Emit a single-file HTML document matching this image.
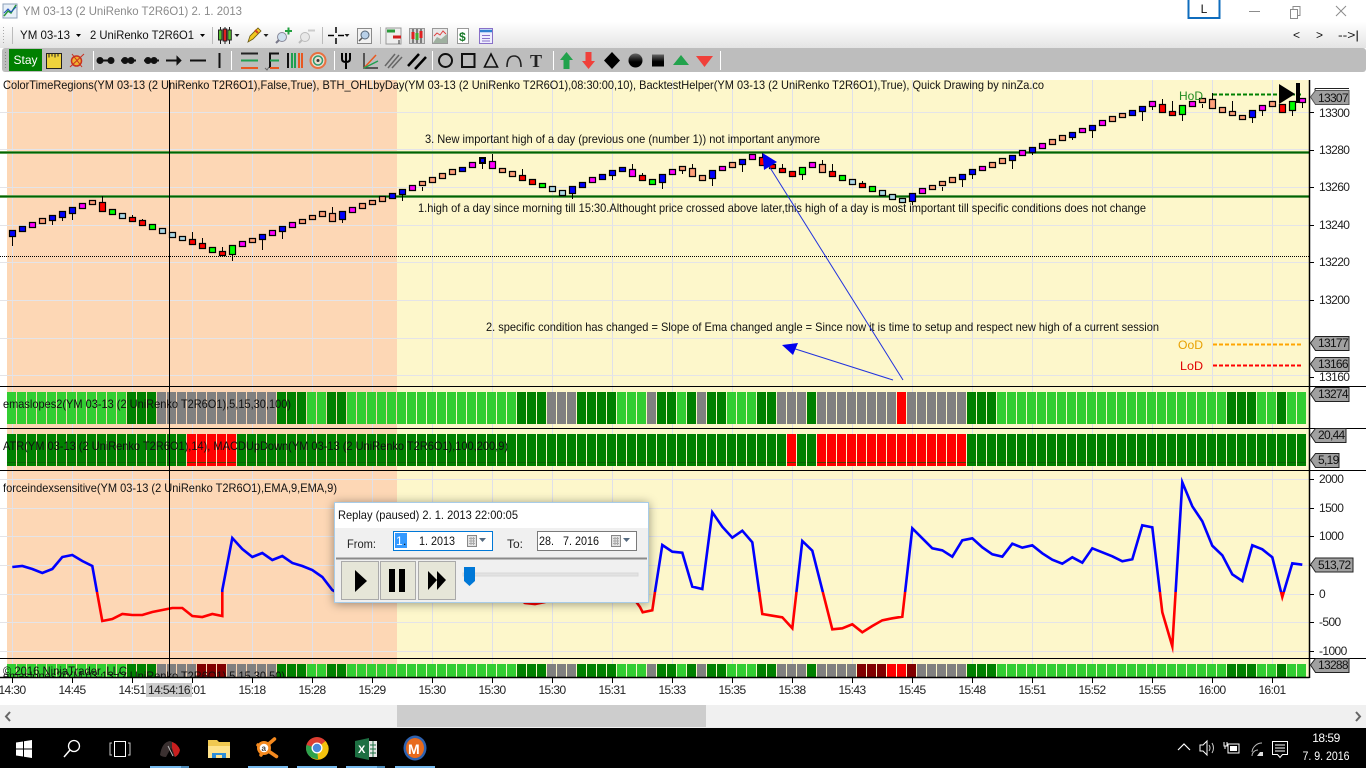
<!DOCTYPE html>
<html><head><meta charset="utf-8"><title>YM 03-13</title>
<style>
html,body{margin:0;padding:0;background:#fff;width:1366px;height:768px;overflow:hidden}
svg{display:block}
text{font-family:"Liberation Sans",Arial,sans-serif;font-size:12px;fill:#111}
.ax{letter-spacing:-.6px;fill:#222}
.t{letter-spacing:-.6px;text-anchor:middle;fill:#222}
.tag{letter-spacing:-.7px}
.tb{fill:#fff}
</style></head><body>
<svg width="1366" height="768" viewBox="0 0 1366 768" xmlns="http://www.w3.org/2000/svg">
<defs>
<linearGradient id="tb1" x1="0" y1="0" x2="0" y2="1"><stop offset="0" stop-color="#fff"/><stop offset="1" stop-color="#e4e4e4"/></linearGradient>
<linearGradient id="ball" x1="0" y1="0" x2="0" y2="1"><stop offset="0" stop-color="#666"/><stop offset=".6" stop-color="#000"/></linearGradient>
<pattern id="gp" x="16" y="0" width="10" height="10" patternUnits="userSpaceOnUse"><rect width="1" height="10" fill="#fdd7b5"/></pattern>
<pattern id="gy" x="16" y="0" width="10" height="10" patternUnits="userSpaceOnUse"><rect width="1" height="10" fill="#fdf7cb"/></pattern>
<clipPath id="cl3"><rect x="0" y="660" width="1309" height="17"/></clipPath>
<clipPath id="up"><rect x="0" y="471" width="1309" height="121"/></clipPath>
<clipPath id="dn"><rect x="0" y="592" width="1309" height="66"/></clipPath>
<filter id="sh" x="-10%" y="-25%" width="120%" height="150%"><feDropShadow dx="0" dy="1" stdDeviation="5" flood-color="#000" flood-opacity=".4"/></filter>
<path id="fi" d="M12.300 567L22.300 566 32.300 569 42.300 573 52.300 569 62.300 557 72.300 555 82.300 561 92.300 566 97 592 102.300 621 112.300 619 122.300 614 132.300 615 142.300 615 152.300 612 162.300 610 172.300 608 182.300 608 192.300 616 202.300 617 212.300 614 222.300 616 222.300 590 232.300 538 242.300 549 252.300 557 262.300 553 272.300 560 282.300 556 292.300 563 302.300 566 312.300 570 322.300 577 332.300 590 342.300 596 515 596 525 603 535 604 545 602 555 596 632 596 640 607 642.700 612.300 652.300 610.300 655 591.700 662.300 545 672.300 551.700 682.300 552.700 692.300 586.700 702.300 589 712.300 512.300 722.300 526.700 732.300 537.700 742.300 530.700 752.300 542.300 762.300 614 772.300 615.700 782.300 617.300 792.300 628.300 802.300 541 812.300 550.700 832.300 629.300 842.300 628.300 852.300 624.300 862.300 632.300 872.300 626 882.300 620.300 892.300 618.300 902.300 616.700 912.300 528.300 922.300 538.300 932.300 548.300 942.300 550.300 952.300 556.700 962.300 540.300 972.300 538.300 982.300 547.300 992.300 554.300 1002.300 556.700 1012.300 543.700 1022.300 547.700 1032.300 545.300 1042.300 553.300 1052.300 559.700 1062.300 563.700 1072.300 557.300 1082.300 562.700 1092.300 548.300 1102.300 552.300 1112.300 556.300 1122.300 561.300 1132.300 559.300 1142.300 525.300 1152.300 527.300 1162.300 612.300 1172.300 646.300 1182.300 482.300 1192.300 506.300 1202.300 521.300 1212.300 545.700 1222.300 555.300 1232.300 574.300 1242.300 581 1252.300 545.300 1262.300 549.300 1272.300 557.300 1282.300 597 1292.300 563.300 1302.300 564.700"/>
</defs>

<!-- title bar -->
<rect width="1366" height="22" fill="#fff"/>
<rect x="3" y="4" width="14" height="14" fill="#e8f0f8" stroke="#8ca0b8"/>
<path d="M4 16l4-5 3 2 5-8" fill="none" stroke="#2a9a3a" stroke-width="1.5"/>
<path d="M4 13l4-4 3 3 5-5" fill="none" stroke="#2050c0" stroke-width="1"/>
<text x="23" y="15" textLength="219" lengthAdjust="spacingAndGlyphs" style="fill:#8a8a8a">YM 03-13 (2 UniRenko T2R6O1)  2. 1. 2013</text>
<rect x="1188.500" y="-1" width="31" height="19" fill="#fff" stroke="#0f6cbd" stroke-width="2"/>
<text x="1204" y="13" text-anchor="middle">L</text>
<path d="M1249 11.500h11" stroke="#8c8c8c"/>
<path d="M1290.500 9.500h7v9h-7zM1293 9.500V6.500h7v9h-2.500" fill="none" stroke="#8c8c8c"/>
<path d="M1336 6l10 10M1346 6l-10 10" stroke="#8c8c8c" stroke-width="1"/>

<!-- toolbar 1 -->
<rect y="22" width="1366" height="26" fill="url(#tb1)"/>
<path d="M3.500 27v16" stroke="#aaa" stroke-dasharray="1 2"/>
<path d="M12.500 27v17" stroke="#bbb"/>
<text x="20" y="39" textLength="50" lengthAdjust="spacingAndGlyphs">YM 03-13</text>
<path d="M76 34h5l-2.500 3z"/>
<text x="90" y="39" textLength="104" lengthAdjust="spacingAndGlyphs">2 UniRenko T2R6O1</text>
<path d="M200 34h5l-2.500 3z"/>
<path d="M212.500 27v17" stroke="#bbb"/>
<g stroke="#222"><path d="M220.500 27v17M225 27v17M229.500 27v17"/>
<rect x="218.500" y="30" width="3.500" height="10" fill="#55c030"/><rect x="223.200" y="29" width="3.500" height="12" fill="#e02020"/><rect x="227.800" y="30" width="3.500" height="10" fill="#55c030"/></g>
<path d="M234.500 34h5l-2.500 3zM263.500 34h5l-2.500 3zM344.500 34h5l-2.500 3z" fill="#222"/>
<path d="M248 42l2-6 8-8 3 3-8 8z" fill="#f2c820" stroke="#6a5a10" stroke-width=".8"/><path d="M255 30l3 3" stroke="#d04020" stroke-width="2"/>
<circle cx="282" cy="37" r="4.500" fill="#cfe0ef" stroke="#889"/><path d="M279 40l-3 3" stroke="#778" stroke-width="2"/><path d="M285 31h7M288.500 27.500v7" stroke="#22a040" stroke-width="2"/>
<circle cx="305" cy="37" r="4.500" fill="#e8e8e8" stroke="#bbb"/><path d="M302 40l-3 3" stroke="#bbb" stroke-width="2"/><path d="M308 30.500h7" stroke="#ccc" stroke-width="2"/>
<path d="M322.500 27v17" stroke="#bbb"/>
<path d="M328 35.500h6M338 35.500h6M336 27v6M336 38v6" stroke="#000" stroke-width="1.500"/>
<rect x="357.500" y="28.500" width="14" height="15" fill="#f2f2f2" stroke="#8a8a8a"/><circle cx="365" cy="35" r="4" fill="#b8d0e8" stroke="#567"/><path d="M362 38l-3 3" stroke="#555" stroke-width="1.500"/>
<path d="M380.500 27v17" stroke="#bbb"/>
<rect x="386" y="28" width="15" height="16" fill="#eee" stroke="#999"/><path d="M387 31h8" stroke="#2a9a3a" stroke-width="3"/><path d="M393 37h8" stroke="#d02020" stroke-width="3"/><path d="M399 40v4" stroke="#333"/>
<rect x="409.500" y="28.500" width="15" height="15" fill="#d8d8d8" stroke="#999"/><path d="M413 29v14M417 29v14M421 29v14" stroke="#222"/><rect x="411.500" y="32" width="3" height="7" fill="#e02020"/><rect x="415.500" y="33" width="3" height="7" fill="#40b030"/><rect x="419.500" y="31" width="3" height="7" fill="#e02020"/>
<rect x="432.500" y="28.500" width="15" height="15" fill="#e8e8e8" stroke="#999"/><path d="M434 36l3-3 3 2 3-4 3 3" fill="none" stroke="#e04040"/><path d="M433 43l4-6 4 2 6-5v9z" fill="#9fb0a0"/>
<rect x="457.500" y="28.500" width="11" height="15" fill="#fff" stroke="#999"/><text x="459" y="41" style="font-size:12px;font-weight:bold;fill:#1a7a2a">$</text>
<rect x="479.500" y="28.500" width="13" height="15" fill="#eef" stroke="#8870c8"/><path d="M480 31h12" stroke="#3080d0" stroke-width="2.500"/><path d="M482 35.500h8M482 38.500h8M482 41h8" stroke="#8870c8"/>
<text x="1293" y="39">&lt;</text>
<text x="1316" y="39">&gt;</text>
<text x="1338" y="39" textLength="21" lengthAdjust="spacingAndGlyphs">--&gt;|</text>

<!-- toolbar 2 -->
<rect x="2" y="48" width="1364" height="24" rx="3" fill="#bdbdbd"/>
<path d="M5.500 52v16" stroke="#888" stroke-dasharray="1 2"/>
<rect x="9" y="49" width="33" height="22" fill="#008000"/>
<text x="25.500" y="64" text-anchor="middle" class="tb">Stay</text>
<rect x="46.500" y="53.500" width="15" height="15" fill="#efd33c" stroke="#222"/><path d="M49 53.500v4M52 53.500v3M55 53.500v4M58 53.500v3" stroke="#222"/>
<circle cx="76.500" cy="61" r="5" fill="#f0b030" stroke="#c83020" stroke-width="1.500"/><path d="M70 67l14-13M72 54l10 13" stroke="#c83020"/>
<g stroke="#fff"><path d="M93.500 51v19M231.500 51v19M334.500 51v19M432.500 51v19M553.500 51v19M720.500 51v19"/></g>
<g stroke="#111" stroke-width="2" fill="#111">
<path d="M98 60.500h15M121 60.500h15M144 60.500h15M190 60.500h16" fill="none"/>
<circle cx="100" cy="60.500" r="2.500"/><circle cx="111" cy="60.500" r="2.500"/>
<circle cx="125" cy="60.500" r="2.500"/><circle cx="131" cy="60.500" r="2.500"/>
<circle cx="148" cy="60.500" r="2.500"/><circle cx="154" cy="60.500" r="2.500"/>
<path d="M166 60.500h14" fill="none"/><path d="M177 56.500l4 4-4 4z" stroke-width="1"/>
<path d="M219.500 53v15" fill="none"/></g>
<path d="M241 53.500h17" stroke="#222" stroke-width="2"/><path d="M241 60.500h17" stroke="#20a050" stroke-width="2"/><path d="M241 68h17" stroke="#e85820" stroke-width="2"/>
<path d="M270 68V53.500h9" fill="none" stroke="#111" stroke-width="2"/><path d="M270 60.500h9" stroke="#20a050" stroke-width="2"/><path d="M270 68h9" stroke="#e85820" stroke-width="2"/><path d="M265 68l2 2 2-3" fill="none" stroke="#666"/>
<path d="M288 53v15" stroke="#111" stroke-width="2"/><path d="M292 53v15M295 53v15" stroke="#20a050" stroke-width="2"/><path d="M299 53v15M302 53v15" stroke="#e85820" stroke-width="2"/>
<circle cx="318" cy="60.500" r="7.500" fill="#e8e0d0" stroke="#e87040" stroke-width="2"/><circle cx="318" cy="60.500" r="4.500" fill="none" stroke="#309a70" stroke-width="1.500"/><circle cx="318" cy="60.500" r="1.500" fill="#333"/>
<path d="M342 53v6q0 3 4 3t4-3v-6M346 53v16" fill="none" stroke="#000" stroke-width="2"/>
<path d="M364 53v15h14" fill="none" stroke="#333" stroke-width="1.500"/><path d="M364 68l12-13" stroke="#e85820" stroke-width="1.500"/><path d="M364 68l14-7" stroke="#20a050" stroke-width="1.500"/>
<path d="M385 66l10-12M388 68l11-13M392 68l10-11" stroke="#666" stroke-width="1.500"/>
<path d="M408 66l11-12M415 69l11-12" stroke="#000" stroke-width="2.500"/>
<circle cx="445.500" cy="60.500" r="6.500" fill="none" stroke="#111" stroke-width="2"/>
<rect x="462" y="54" width="12.500" height="13" fill="none" stroke="#111" stroke-width="2"/>
<path d="M491 54l6.500 13h-13z" fill="none" stroke="#111" stroke-width="1.600"/>
<path d="M507 67q0-11 7-11t7 11" fill="none" stroke="#222" stroke-width="1.600"/>
<text x="530" y="67" style="font-family:'Liberation Serif',serif;font-size:18px;font-weight:bold;fill:#222">T</text>
<path d="M566.500 52l6.500 8h-3.500v9h-6v-9h-3.500z" fill="#22a24c"/>
<path d="M588.500 69l6.500-8h-3.500v-9h-6v9h-3.500z" fill="#f0403a"/>
<path d="M612 52l8 8.500-8 8.500-8-8.500z" fill="#000"/>
<circle cx="635.500" cy="60.500" r="7" fill="url(#ball)"/>
<rect x="652" y="54.500" width="12" height="12" fill="url(#ball)"/>
<path d="M681 55l8 10h-16z" fill="#22a24c"/>
<path d="M696 56h17l-8.500 11z" fill="#f0403a"/>

<!-- chart background -->
<rect y="72" width="1366" height="8" fill="#fff"/>
<rect x="7" y="80" width="390" height="597" fill="#fdd7b5"/>
<rect x="397" y="80" width="912" height="597" fill="#fdf7cb"/>

<!-- grid -->
<path stroke="#dfe0ea" fill="none" d="M12.500 80V677M72.500 80V677M132.500 80V677M192.500 80V677M252.500 80V677M312.500 80V677M372.500 80V677M432.500 80V677M492.500 80V677M552.500 80V677M612.500 80V677M672.500 80V677M732.500 80V677M792.500 80V677M852.500 80V677M912.500 80V677M972.500 80V677M1032.500 80V677M1092.500 80V677M1152.500 80V677M1212.500 80V677M1272.500 80V677"/>
<path stroke="#e4e4e8" fill="none" d="M0 112.500H1309M0 149.500H1309M0 187.500H1309M0 225.500H1309M0 262.500H1309M0 300.500H1309M0 338.500H1309M0 375.500H1309M0 479.500H1309M0 508.500H1309M0 536.500H1309M0 565.500H1309M0 594.500H1309M0 622.500H1309M0 651.500H1309"/>

<!-- horizontal levels -->
<path d="M0 152.500H1309M0 196.500H1309" stroke="#7fae6f" stroke-width="3"/>
<path d="M0 152.500H1309M0 196.500H1309" stroke="#006400" stroke-width="1.500"/>
<path d="M0 256.500H1309" stroke="#000" stroke-dasharray="1 1"/>

<!-- wicks -->
<path stroke="#000" fill="none" d="M12.500 237V246M52.500 221V225M62.500 218V221M72.500 214V220M102.500 196V202M132.500 215V217M142.500 219V220M192.500 232V239M202.500 238V243M222.500 247V251M232.500 255V261M262.500 240V250M282.500 232V239M332.500 207V213M342.500 220V223M402.500 194V201M422.500 187V191M482.500 164V169M492.500 154V161M522.500 169V175M572.500 194V199M612.500 175V180M632.500 164V169M642.500 173V175M662.500 183V189M682.500 171V174M692.500 164V168M712.500 179V186M742.500 164V172M762.500 153V157M782.500 164V169M802.500 175V180M822.500 160V165M832.500 164V172M862.500 181V183M912.500 202V205M942.500 187V191M962.500 179V187M972.500 175V179M1012.500 160V169M1032.500 152V155M1072.500 137V140M1092.500 130V138M1142.500 111V121M1152.500 107V110M1162.500 99V104M1172.500 101V111M1182.500 115V121M1202.500 104V108M1212.500 93V99M1232.500 101V111M1252.500 118V123M1262.500 111V116M1292.500 111V116M1302.500 103V108"/>
<!-- bodies -->
<g stroke="#000" stroke-width="1.200">
<path fill="#0000ff" d="M9.500 230.500h6v6h-6zM19.500 226.500h6v5h-6zM49.500 215.500h6v5h-6zM59.500 211.500h6v6h-6zM69.500 207.500h6v6h-6zM259.500 234.500h6v5h-6zM279.500 226.500h6v5h-6zM339.500 211.500h6v8h-6zM389.500 193.500h6v5h-6zM399.500 189.500h6v5h-6zM459.500 167.500h6v4h-6zM569.500 186.500h6v7h-6zM579.500 182.500h6v5h-6zM599.500 174.500h6v5h-6zM609.500 170.500h6v5h-6zM619.500 167.500h6v4h-6zM659.500 174.500h6v8h-6zM709.500 170.500h6v8h-6zM739.500 159.500h6v5h-6zM909.500 193.500h6v8h-6zM959.500 174.500h6v5h-6zM969.500 169.500h6v5h-6zM1009.500 155.500h6v5h-6zM1029.500 147.500h6v5h-6zM1069.500 132.500h6v5h-6zM1089.500 125.500h6v5h-6zM1129.500 110.500h6v5h-6zM1139.500 106.500h6v5h-6zM1249.500 110.500h6v7h-6z"/>
<path fill="#ff00ff" d="M29.500 222.500h6v5h-6zM79.500 203.500h6v5h-6zM239.500 241.500h6v5h-6zM269.500 230.500h6v5h-6zM289.500 222.500h6v5h-6zM349.500 207.500h6v5h-6zM409.500 185.500h6v5h-6zM469.500 162.500h6v5h-6zM489.500 161.500h6v7h-6zM589.500 177.500h6v5h-6zM629.500 169.500h6v7h-6zM669.500 169.500h6v5h-6zM719.500 166.500h6v4h-6zM749.500 154.500h6v5h-6zM809.500 162.500h6v5h-6zM919.500 188.500h6v5h-6zM979.500 166.500h6v4h-6zM1019.500 150.500h6v5h-6zM1039.500 143.500h6v5h-6zM1079.500 128.500h6v4h-6zM1099.500 120.500h6v5h-6zM1149.500 101.500h6v5h-6zM1189.500 101.500h6v5h-6zM1259.500 105.500h6v5h-6zM1299.500 98.500h6v4h-6z"/>
<path fill="#ffa07a" d="M39.500 218.500h6v5h-6zM89.500 200.500h6v4h-6zM249.500 238.500h6v4h-6zM299.500 219.500h6v4h-6zM309.500 215.500h6v4h-6zM319.500 211.500h6v5h-6zM329.500 213.500h6v8h-6zM359.500 203.500h6v5h-6zM369.500 200.500h6v4h-6zM379.500 196.500h6v5h-6zM419.500 181.500h6v4h-6zM429.500 177.500h6v5h-6zM439.500 173.500h6v5h-6zM449.500 169.500h6v5h-6zM499.500 168.500h6v4h-6zM509.500 171.500h6v5h-6zM679.500 166.500h6v4h-6zM689.500 168.500h6v8h-6zM699.500 175.500h6v5h-6zM729.500 162.500h6v5h-6zM819.500 164.500h6v8h-6zM929.500 185.500h6v4h-6zM939.500 181.500h6v4h-6zM949.500 177.500h6v5h-6zM989.500 162.500h6v5h-6zM999.500 158.500h6v5h-6zM1049.500 139.500h6v5h-6zM1059.500 135.500h6v5h-6zM1109.500 116.500h6v5h-6zM1119.500 113.500h6v4h-6zM1199.500 98.500h6v4h-6zM1209.500 99.500h6v9h-6zM1219.500 107.500h6v5h-6zM1229.500 111.500h6v4h-6zM1239.500 115.500h6v4h-6zM1269.500 101.500h6v5h-6z"/>
<path fill="#ff0000" d="M99.500 202.500h6v9h-6zM129.500 217.500h6v4h-6zM139.500 220.500h6v5h-6zM189.500 239.500h6v5h-6zM199.500 243.500h6v5h-6zM219.500 251.500h6v4h-6zM519.500 175.500h6v5h-6zM529.500 179.500h6v5h-6zM639.500 175.500h6v5h-6zM759.500 157.500h6v8h-6zM769.500 164.500h6v4h-6zM779.500 168.500h6v4h-6zM789.500 171.500h6v5h-6zM829.500 171.500h6v5h-6zM859.500 183.500h6v4h-6zM1159.500 104.500h6v8h-6zM1169.500 111.500h6v4h-6zM1279.500 104.500h6v8h-6z"/>
<path fill="#00ff00" d="M109.500 209.500h6v5h-6zM149.500 224.500h6v5h-6zM209.500 247.500h6v5h-6zM229.500 245.500h6v9h-6zM539.500 183.500h6v4h-6zM649.500 179.500h6v5h-6zM799.500 167.500h6v7h-6zM839.500 175.500h6v5h-6zM869.500 186.500h6v5h-6zM1179.500 105.500h6v9h-6zM1289.500 101.500h6v9h-6z"/>
<path fill="#add8e6" d="M119.500 213.500h6v5h-6zM159.500 228.500h6v5h-6zM169.500 232.500h6v5h-6zM179.500 236.500h6v4h-6zM549.500 186.500h6v5h-6zM559.500 190.500h6v5h-6zM849.500 179.500h6v5h-6zM879.500 190.500h6v5h-6zM889.500 194.500h6v5h-6zM899.500 198.500h6v4h-6z"/>
<path fill="#0000ff" stroke-width="2" d="M480 158h5v5h-5z"/>
</g>

<!-- annotations -->
<text x="425" y="143" textLength="395" lengthAdjust="spacingAndGlyphs">3. New important high of a day (previous one (number 1)) not important anymore</text>
<text x="418" y="212" textLength="728" lengthAdjust="spacingAndGlyphs">1.high of a day since morning till 15:30.Althought price crossed above later,this high of a day is most important till specific conditions does not change</text>
<text x="486" y="331" textLength="673" lengthAdjust="spacingAndGlyphs">2. specific condition has changed = Slope of Ema changed angle = Since now it is time to setup and respect new high of a current session</text>
<path d="M903 380L764 158M893 380L786 346" stroke="#2233dd" fill="none"/>
<path d="M762.500 153L777 162 764 170z" fill="#0000ee"/>
<path d="M782 345L798 343 793 355z" fill="#0000ee"/>

<!-- HoD etc -->
<text x="1179" y="100" textLength="24" lengthAdjust="spacingAndGlyphs" style="fill:#228b22">HoD</text>
<path d="M1213 94.500H1302" stroke="#008000" stroke-width="2" stroke-dasharray="4 2"/>
<text x="1178" y="349" textLength="25" lengthAdjust="spacingAndGlyphs" style="fill:#e8a000">OoD</text>
<path d="M1213 344.500H1302" stroke="#ffa500" stroke-width="2" stroke-dasharray="4 2"/>
<text x="1180" y="370" textLength="23" lengthAdjust="spacingAndGlyphs" style="fill:#e00000">LoD</text>
<path d="M1213 365.500H1302" stroke="#ff0000" stroke-width="2" stroke-dasharray="4 2"/>
<path d="M1279 84L1295 94 1279 104z" fill="#000"/>
<rect x="1296" y="83" width="4" height="20" fill="#000"/>

<!-- title text -->
<text x="3" y="89" textLength="1041" lengthAdjust="spacingAndGlyphs">ColorTimeRegions(YM 03-13 (2 UniRenko T2R6O1),False,True), BTH_OHLbyDay(YM 03-13 (2 UniRenko T2R6O1),08:30:00,10), BacktestHelper(YM 03-13 (2 UniRenko T2R6O1),True), Quick Drawing by ninZa.co</text>

<!-- emaslopes panel -->
<g>
<rect x="7" y="392" width="1300" height="32" fill="#32cd32"/>
<g fill="#008000"><rect x="127" y="392" width="30" height="32"/><rect x="277" y="392" width="30" height="32"/><rect x="327" y="392" width="20" height="32"/><rect x="517" y="392" width="30" height="32"/><rect x="577" y="392" width="40" height="32"/><rect x="657" y="392" width="20" height="32"/><rect x="687" y="392" width="10" height="32"/><rect x="707" y="392" width="20" height="32"/><rect x="757" y="392" width="20" height="32"/><rect x="807" y="392" width="10" height="32"/><rect x="967" y="392" width="30" height="32"/><rect x="1227" y="392" width="30" height="32"/><rect x="1277" y="392" width="10" height="32"/></g>
<g fill="#808080"><rect x="157" y="392" width="120" height="32"/><rect x="547" y="392" width="30" height="32"/><rect x="647" y="392" width="10" height="32"/><rect x="697" y="392" width="10" height="32"/><rect x="777" y="392" width="30" height="32"/><rect x="817" y="392" width="80" height="32"/><rect x="907" y="392" width="60" height="32"/></g>
<rect x="897" y="392" width="10" height="32" fill="#ff0000"/>
<rect x="7" y="392" width="390" height="32" fill="url(#gp)"/><rect x="397" y="392" width="910" height="32" fill="url(#gy)"/>
</g>
<text x="3" y="408" textLength="288" lengthAdjust="spacingAndGlyphs">emaslopes2(YM 03-13 (2 UniRenko T2R6O1),5,15,30,100)</text>

<!-- ATR panel -->
<g>
<rect x="7" y="434" width="1300" height="32" fill="#008000"/>
<rect x="187" y="434" width="50" height="32" fill="#ff0000"/><rect x="787" y="434" width="10" height="32" fill="#ff0000"/><rect x="817" y="434" width="150" height="32" fill="#ff0000"/>
<path d="M7 462.500H1307" stroke="#0a5a0a" opacity=".7"/>
<rect x="7" y="434" width="390" height="32" fill="url(#gp)"/><rect x="397" y="434" width="910" height="32" fill="url(#gy)"/>
</g>
<text x="3" y="450" textLength="505" lengthAdjust="spacingAndGlyphs">ATR(YM 03-13 (2 UniRenko T2R6O1),14), MACDUpDown(YM 03-13 (2 UniRenko T2R6O1),100,200,9)</text>

<!-- force index -->
<text x="3" y="492" textLength="334" lengthAdjust="spacingAndGlyphs">forceindexsensitive(YM 03-13 (2 UniRenko T2R6O1),EMA,9,EMA,9)</text>
<g fill="none" stroke-width="2.600" stroke-linejoin="miter" stroke-miterlimit="10">
<use href="#fi" stroke="#0000ff" clip-path="url(#up)"/>
<use href="#fi" stroke="#ff0000" clip-path="url(#dn)"/>
</g>

<!-- bottom strip -->
<g>
<rect x="7" y="664" width="1300" height="13" fill="#32cd32"/>
<g fill="#008000"><rect x="127" y="664" width="30" height="13"/><rect x="277" y="664" width="30" height="13"/><rect x="327" y="664" width="20" height="13"/><rect x="517" y="664" width="30" height="13"/><rect x="577" y="664" width="40" height="13"/><rect x="657" y="664" width="20" height="13"/><rect x="687" y="664" width="10" height="13"/><rect x="707" y="664" width="20" height="13"/><rect x="757" y="664" width="20" height="13"/><rect x="807" y="664" width="10" height="13"/><rect x="967" y="664" width="30" height="13"/><rect x="1227" y="664" width="30" height="13"/><rect x="1277" y="664" width="10" height="13"/></g>
<g fill="#808080"><rect x="157" y="664" width="40" height="13"/><rect x="227" y="664" width="50" height="13"/><rect x="547" y="664" width="30" height="13"/><rect x="647" y="664" width="10" height="13"/><rect x="697" y="664" width="10" height="13"/><rect x="777" y="664" width="30" height="13"/><rect x="817" y="664" width="40" height="13"/><rect x="917" y="664" width="50" height="13"/></g>
<g fill="#800000"><rect x="197" y="664" width="30" height="13"/><rect x="857" y="664" width="30" height="13"/><rect x="907" y="664" width="10" height="13"/></g>
<rect x="887" y="664" width="20" height="13" fill="#ff0000"/>
<rect x="7" y="664" width="390" height="13" fill="url(#gp)"/><rect x="397" y="664" width="910" height="13" fill="url(#gy)"/>
</g>
<g clip-path="url(#cl3)">
<text x="3" y="680" textLength="282" lengthAdjust="spacingAndGlyphs">emaslopes2(YM 03-13 (2 UniRenko T2R6O1),5,15,30,50)</text>
</g>
<text x="3" y="675" textLength="124" lengthAdjust="spacingAndGlyphs">© 2016 NinjaTrader, LLC</text>

<!-- crosshair & panel lines -->
<path d="M169.500 80V678" stroke="#000"/>
<path d="M0 386.500H1366M0 428.500H1366M0 470.500H1366M0 658.500H1366" stroke="#000"/>
<path d="M0 677.500H1309.500" stroke="#000" stroke-width="1.500"/>
<path d="M1309.500 80V678" stroke="#000" stroke-width="1.500"/>

<!-- right axis -->
<path stroke="#000" d="M1309 112.500h5M1309 150.500h5M1309 187.500h5M1309 225.500h5M1309 262.500h5M1309 300.500h5M1309 377.500h5M1309 479.500h5M1309 508.500h5M1309 536.500h5M1309 565.500h5M1309 594.500h5M1309 622.500h5M1309 651.500h5"/>
<g>
<text x="1319" y="117" class="ax">13300</text><text x="1319" y="154" class="ax">13280</text><text x="1319" y="191" class="ax">13260</text><text x="1319" y="229" class="ax">13240</text><text x="1319" y="266" class="ax">13220</text><text x="1319" y="304" class="ax">13200</text><text x="1319" y="381" class="ax">13160</text>
<text x="1319" y="483" class="ax">2000</text><text x="1319" y="512" class="ax">1500</text><text x="1319" y="540" class="ax">1000</text><text x="1319" y="569" class="ax">500</text><text x="1319" y="598" class="ax">0</text><text x="1319" y="626" class="ax">-500</text><text x="1319" y="655" class="ax">-1000</text>
</g>
<!-- tags -->
<g fill="#a0a0a0" stroke="#222">
<path d="M1310.500 97l5-6.500h33.500v14h-33.500z" stroke="#555"/><path d="M1315 88.500h34M1315 88.500v2" fill="none"/>
<path d="M1310.500 343l5-6.500h33.500v14h-33.500z"/>
<path d="M1310.500 364l5-6.500h33.500v14h-33.500z"/>
<path d="M1310.500 394l5-6.500h33.500v14h-33.500z"/>
<path d="M1310.500 435l5-6.500h30.500v14h-30.500z"/>
<path d="M1310.500 460l5-6.500h23.500v14h-23.500z"/>
<path d="M1310.500 564.500l5-6.500h37.500v14h-37.500z"/>
<path d="M1310.500 665l5-6.500h33.500v14h-33.500z"/>
</g>
<g>
<text x="1318" y="102" class="tag">13307</text>
<text x="1318" y="347" class="tag">13177</text>
<text x="1318" y="368" class="tag">13166</text>
<text x="1318" y="398" class="tag">13274</text>
<text x="1318" y="439" class="tag">20,44</text>
<text x="1318" y="464" class="tag">5,19</text>
<text x="1318" y="569" class="tag">513,72</text>
<text x="1318" y="669" class="tag">13288</text>
</g>

<!-- time axis -->
<rect y="678.500" width="1366" height="26.500" fill="#fff"/>
<path stroke="#000" d="M12.500 678v5M72.500 678v5M132.500 678v5M192.500 678v5M252.500 678v5M312.500 678v5M372.500 678v5M432.500 678v5M492.500 678v5M552.500 678v5M612.500 678v5M672.500 678v5M732.500 678v5M792.500 678v5M852.500 678v5M912.500 678v5M972.500 678v5M1032.500 678v5M1092.500 678v5M1152.500 678v5M1212.500 678v5M1272.500 678v5"/>
<text x="12" y="694" class="t">14:30</text><text x="72" y="694" class="t">14:45</text><text x="132" y="694" class="t">14:51</text><text x="192" y="694" class="t">15:01</text><text x="252" y="694" class="t">15:18</text><text x="312" y="694" class="t">15:28</text><text x="372" y="694" class="t">15:29</text><text x="432" y="694" class="t">15:30</text><text x="492" y="694" class="t">15:30</text><text x="552" y="694" class="t">15:30</text><text x="612" y="694" class="t">15:31</text><text x="672" y="694" class="t">15:33</text><text x="732" y="694" class="t">15:35</text><text x="792" y="694" class="t">15:38</text><text x="852" y="694" class="t">15:43</text><text x="912" y="694" class="t">15:45</text><text x="972" y="694" class="t">15:48</text><text x="1032" y="694" class="t">15:51</text><text x="1092" y="694" class="t">15:52</text><text x="1152" y="694" class="t">15:55</text><text x="1212" y="694" class="t">16:00</text><text x="1272" y="694" class="t">16:01</text>
<rect x="146" y="683" width="46" height="14" fill="#ccc"/>
<text x="169" y="694" class="t">14:54:16</text>

<!-- scrollbar -->
<rect y="705" width="1366" height="23" fill="#f0f0f0"/>
<rect x="397" y="705" width="309" height="22" fill="#cdcdcd"/>
<path d="M10 712l-4 4.500 4 4.500" fill="none" stroke="#666" stroke-width="2"/>
<path d="M1356 712l4 4.500-4 4.500" fill="none" stroke="#666" stroke-width="2"/>

<!-- dialog -->
<rect x="334.500" y="502.500" width="314" height="100" fill="#f0f0f0" stroke="#a8cce8" filter="url(#sh)"/>
<rect x="335" y="503" width="313" height="25" fill="#fff"/>
<text x="338" y="519" textLength="180" lengthAdjust="spacingAndGlyphs">Replay (paused) 2. 1. 2013 22:00:05</text>
<text x="347" y="548" textLength="29" lengthAdjust="spacingAndGlyphs" style="fill:#222">From:</text>
<rect x="393.500" y="531.500" width="99" height="19" fill="#fff" stroke="#0078d7"/>
<rect x="395" y="533" width="12" height="15" fill="#3399ff"/>
<text x="396" y="545" style="fill:#fff">1</text>
<text x="403" y="545">.</text>
<text x="419" y="545" textLength="36" lengthAdjust="spacingAndGlyphs">1. 2013</text>
<rect x="467.500" y="535.500" width="9" height="11" fill="#e4e4e4" stroke="#888"/><path d="M469 538.500h6M469 541h6M469 543.500h6M471 537v8M473.500 537v8" stroke="#aaa"/>
<path d="M479 538h7l-3.500 4z" fill="#556a80"/>
<text x="507" y="548" textLength="16" lengthAdjust="spacingAndGlyphs" style="fill:#222">To:</text>
<rect x="537.500" y="531.500" width="99" height="19" fill="#fff" stroke="#7a7a7a"/>
<text x="539" y="545" textLength="60" lengthAdjust="spacingAndGlyphs" xml:space="preserve">28.   7. 2016</text>
<rect x="611.500" y="535.500" width="9" height="11" fill="#e4e4e4" stroke="#888"/><path d="M613 538.500h6M613 541h6M613 543.500h6M615 537v8M617.500 537v8" stroke="#aaa"/>
<path d="M623 538h7l-3.500 4z" fill="#556a80"/>
<path d="M336 558.500H647" stroke="#8a8a8a" stroke-width="2"/>
<g fill="#e6e6d8" stroke="#aaa"><rect x="341.500" y="561.500" width="37" height="38"/><rect x="380.500" y="561.500" width="35" height="38"/><rect x="418.500" y="561.500" width="37" height="38"/></g>
<path d="M355 570l12 11-12 11z" fill="#000"/>
<path d="M389 569h6v23h-6zM399 569h6v23h-6z" fill="#000"/>
<path d="M428 571l9 9-9 10zM437 571l9 9-9 10z" fill="#000"/>
<rect x="463" y="573" width="175" height="3" fill="#e2e2e2" stroke="#d8d8d8"/>
<path d="M464 567h11v14l-5.500 5-5.500-5z" fill="#0078d7"/>

<!-- taskbar -->
<rect y="728" width="1366" height="40" fill="#000"/>
<path d="M16 742.500l7-1v7h-7zM24 741.300l8-1.300v8.500h-8zM16 749.500h7v7l-7-1zM24 749.500h8v8.500l-8-1.200z" fill="#fff"/>
<circle cx="74" cy="746" r="5.500" fill="none" stroke="#fff" stroke-width="1.300"/><path d="M70 750l-6 7" stroke="#fff" stroke-width="1.500"/>
<rect x="114.500" y="741.500" width="11" height="15" fill="none" stroke="#fff"/><path d="M112 743h-2v12h2M128 743h2v12h-2" fill="none" stroke="#ccc"/>
<path d="M160 755q2-13 10-14 7 2 9 9-1 5-5 7l-3-9-5 9q-4 0-6-2z" fill="#3a3030"/><path d="M172 742q6 2 8 8-1 5-5 7l-3-9z" fill="#c81e1e"/><path d="M168 746l5 10" stroke="#bbb"/>
<path d="M208 740h9l2 2h11v16h-22z" fill="#f0c850"/><rect x="208" y="746" width="22" height="12" fill="#ffe38c"/><path d="M212 758v-5h14v5h-4v-3h-6v3z" fill="#2f8ed8"/>
<path d="M264 748L274.500 739M264 748L276.500 756.500M264 748L258 745M264 748L261 755" stroke="#f58a1f" stroke-width="3.500" stroke-linecap="round"/><circle cx="264" cy="748" r="7" fill="#f58a1f"/><circle cx="264" cy="748" r="4.300" fill="#fff"/><text x="261.500" y="751" style="font-size:8px;font-weight:bold;fill:#444">a</text>
<circle cx="317" cy="748" r="11" fill="#dd3e32"/><path d="M317 748L306.500 745A11 11 0 0 0 312 758z" fill="#2ea24d"/><path d="M317 748L328 745A11 11 0 0 1 311 757.500z" fill="#f4c20d"/><path d="M317 748L325.500 741A11 11 0 0 1 320 759z" fill="#f4c20d"/><path d="M317 748L309 755A11 11 0 0 0 318 759z" fill="#2ea24d"/><circle cx="317" cy="748" r="5.500" fill="#fff"/><circle cx="317" cy="748" r="4.200" fill="#4a89dc"/>
<path d="M355 741l14-3v22l-14-3z" fill="#1d6f42"/><rect x="369" y="741" width="8" height="16" fill="#fff" opacity=".9"/><path d="M370 745h6M370 749h6M370 753h6M373 741v16" stroke="#1d6f42"/><text x="358" y="753" style="font-size:11px;font-weight:bold;fill:#fff">X</text>
<ellipse cx="415" cy="748" rx="11.500" ry="12.500" fill="#2e62b0"/><ellipse cx="415" cy="748" rx="9" ry="10" fill="#e86a1c"/><text x="408" y="754" style="font-size:14px;font-weight:bold;fill:#fff">M</text>
<g fill="#76b9ed"><rect x="150" y="766" width="31" height="2"/><rect x="181" y="766" width="8" height="2" fill="#4d8ab8"/><rect x="248" y="766" width="40" height="2"/><rect x="297" y="766" width="40" height="2"/><rect x="346" y="766" width="31" height="2"/><rect x="377" y="766" width="8" height="2" fill="#4d8ab8"/><rect x="395" y="766" width="40" height="2"/></g>
<!-- tray -->
<path d="M1178 750l6-6 6 6" fill="none" stroke="#fff" stroke-width="1.200"/>
<path d="M1200 745h3l4-4v14l-4-4h-3z" fill="none" stroke="#fff"/><path d="M1209 745q2 3 0 6M1212 743q3 5 0 10" fill="none" stroke="#ccc"/>
<rect x="1228" y="744" width="11" height="9" fill="none" stroke="#fff"/><rect x="1230" y="746" width="7" height="5" fill="#fff"/><path d="M1224 742v4h3v-4M1225 746v3" stroke="#fff" fill="none"/>
<path d="M1252 756a6 6 0 0 1 6-6M1252 752a10 10 0 0 1 10-9" fill="none" stroke="#bbb"/><path d="M1257 756l3-4v4z" fill="#ddd"/><rect x="1260" y="752" width="3" height="4" fill="#ddd"/>
<path d="M1272.500 741.500h15v13h-5l-2.500 3-2.500-3h-5zM1275 745h10M1275 748h10M1275 751h10" fill="none" stroke="#fff"/>
<text x="1326" y="742" text-anchor="middle" class="tb" style="letter-spacing:-.5px">18:59</text>
<text x="1326" y="760" text-anchor="middle" class="tb" textLength="47" lengthAdjust="spacingAndGlyphs">7. 9. 2016</text>
</svg>
</body></html>
